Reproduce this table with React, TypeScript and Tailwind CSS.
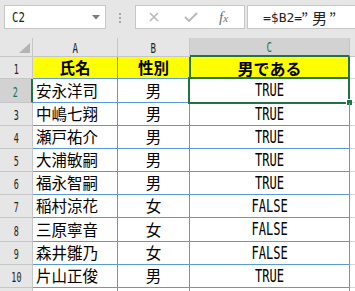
import React from 'react';

type Row = { no: number; name: string; sex: string; result: string; h: string };

const ROWS: Row[] = [
  { no: 2, name: '安永洋司', sex: '男', result: 'TRUE', h: 'h-[24px]' },
  { no: 3, name: '中嶋七翔', sex: '男', result: 'TRUE', h: 'h-[23px]' },
  { no: 4, name: '瀬戸祐介', sex: '男', result: 'TRUE', h: 'h-[23px]' },
  { no: 5, name: '大浦敏嗣', sex: '男', result: 'TRUE', h: 'h-[23px]' },
  { no: 6, name: '福永智嗣', sex: '男', result: 'TRUE', h: 'h-[23px]' },
  { no: 7, name: '稲村涼花', sex: '女', result: 'FALSE', h: 'h-[23px]' },
  { no: 8, name: '三原寧音', sex: '女', result: 'FALSE', h: 'h-[24px]' },
  { no: 9, name: '森井雛乃', sex: '女', result: 'FALSE', h: 'h-[23px]' },
  { no: 10, name: '片山正俊', sex: '男', result: 'TRUE', h: 'h-[23px]' },
];

// Half-width glyphs in the sheet are tall and narrow, so squeeze a mono face.
const Narrow = ({ children, className = '' }: { children: React.ReactNode; className?: string }) => (
  <span className={`inline-block font-['DejaVu_Sans_Mono',monospace] leading-none ${className}`}>{children}</span>
);

const cjk = "font-['Noto_Sans_CJK_JP',sans-serif]";

const App: React.FC = () => {
  return (
    <div className="w-[355px] h-[291px] overflow-hidden bg-white select-none">
      {/* Name box + formula bar */}
      <div className="h-[38px] bg-[#e6e6e6] flex items-start pt-[5px]">
        <div className="ml-[4px] w-[102px] h-[24px] bg-white border border-[#c6c6c6] flex items-center justify-between pl-[7px] pr-[5px]">
          <Narrow className="text-[14px] text-[#222] scale-x-[0.76] origin-left">C2</Narrow>
          <svg width="8" height="5" viewBox="0 0 8 5">
            <polygon points="0,0 8,0 4,4.5" fill="#7a7a7a" />
          </svg>
        </div>
        <div className="ml-[13px] mt-[8px] flex flex-col gap-[2px]">
          <span className="w-[2px] h-[2px] bg-[#a8a8a8]" />
          <span className="w-[2px] h-[2px] bg-[#a8a8a8]" />
          <span className="w-[2px] h-[2px] bg-[#a8a8a8]" />
        </div>
        <div className="ml-[14px] w-[110px] h-[24px] bg-white border border-[#c6c6c6] flex items-center">
          <svg className="ml-[13px]" width="10" height="10" viewBox="0 0 10 10">
            <path d="M1 1 L9 9 M9 1 L1 9" stroke="#b8b8b8" strokeWidth="1.6" />
          </svg>
          <svg className="ml-[25px]" width="14" height="10" viewBox="0 0 14 10">
            <path d="M1 5 L5 9 L13 1" stroke="#b8b8b8" strokeWidth="1.8" fill="none" />
          </svg>
          <span className="ml-[21px] font-['Liberation_Serif',serif] italic text-[15px] text-[#6e6e6e] leading-none">
            f<span className="text-[11px]">x</span>
          </span>
        </div>
        <div className="ml-[2px] flex-1 h-[24px] bg-white border border-r-0 border-[#c6c6c6] flex items-center pl-[15px]">
          <Narrow className="w-[38px] text-[13px] text-[#222]">=$B2=</Narrow>
          <span className={`${cjk} w-[10px] text-[15px] text-[#222] leading-none`}>”</span>
          <span className={`${cjk} w-[17px] text-center text-[15px] text-[#222] leading-none`}>男</span>
          <span className={`${cjk} ml-[1px] text-[15px] text-[#222] leading-none`}>”</span>
        </div>
      </div>

      {/* Column headers */}
      <div className="flex h-[19px] bg-[#e6e6e6]">
        <div className="w-[33px] border-r border-b border-[#c6c6c6] relative">
          <svg className="absolute right-[2px] bottom-[3px]" width="11" height="10" viewBox="0 0 11 10">
            <polygon points="11,0 11,10 0,10" fill="#b4b4b4" />
          </svg>
        </div>
        <div className="w-[85px] border-r border-b border-[#c6c6c6] flex items-center justify-center pt-[2px]">
          <Narrow className="text-[14px] text-[#222] scale-x-[0.65]">A</Narrow>
        </div>
        <div className="w-[72px] border-r border-b border-[#c6c6c6] flex items-center justify-center pt-[2px]">
          <Narrow className="text-[14px] text-[#222] scale-x-[0.65]">B</Narrow>
        </div>
        <div className="w-[160px] bg-[#d2d2d2] border-r border-[#c6c6c6] border-b-2 border-b-[#217346] flex items-center justify-center pt-[1px]">
          <Narrow className="text-[14px] text-[#217346] scale-x-[0.65]">C</Narrow>
        </div>
        <div className="flex-1 border-b border-[#c6c6c6]" />
      </div>

      {/* Row 1: yellow header cells */}
      <div className="flex h-[22px]">
        <div className="w-[33px] bg-[#e6e6e6] border-r border-b border-[#c6c6c6] flex items-end justify-center pb-[2px]">
          <Narrow className="text-[14px] text-[#222] scale-x-[0.6]">1</Narrow>
        </div>
        <div className={`w-[85px] bg-[#ffff00] border-r border-b border-[#5b9bd5] flex items-center justify-center ${cjk} font-bold text-[15.5px] text-black`}>
          氏名
        </div>
        <div className={`w-[72px] bg-[#ffff00] border-r border-b border-[#5b9bd5] flex items-center justify-center ${cjk} font-bold text-[15.5px] text-black`}>
          性別
        </div>
        <div className={`relative w-[160px] bg-[#ffff00] border-r border-b border-[#5b9bd5] flex items-center justify-center ${cjk} font-bold text-[16px] text-black`}>
          <span className="absolute -left-[1px] top-0 bottom-0 w-[2px] bg-[#217346]" />
          <span className="absolute -right-[1px] top-0 bottom-0 w-[2px] bg-[#217346]" />
          男である
        </div>
        <div className="flex-1 border-b border-[#d4d4d4]" />
      </div>

      {/* Data rows */}
      {ROWS.map(r => {
        const active = r.no === 2;
        return (
          <div key={r.no} className={`flex ${r.h}`}>
            <div
              className={`w-[33px] border-b border-[#c6c6c6] flex items-end justify-center pb-[3px] ${
                active ? 'bg-[#d2d2d2] border-r-2 border-r-[#217346]' : 'bg-[#e6e6e6] border-r'
              }`}
            >
              <Narrow className={`text-[14px] scale-x-[0.6] ${active ? 'text-[#217346]' : 'text-[#222]'}`}>{r.no}</Narrow>
            </div>
            <div className={`w-[85px] border-r border-b border-[#5b9bd5] flex items-center pl-[3px] ${cjk} text-[15.5px] text-black`}>
              {r.name}
            </div>
            <div className={`w-[72px] border-r border-b border-[#5b9bd5] flex items-center justify-center ${cjk} text-[15.5px] text-black`}>
              {r.sex}
            </div>
            <div className="relative w-[160px] border-r border-b border-[#5b9bd5] flex items-center justify-center">
              <Narrow className="text-[17px] text-black scale-x-[0.71]">{r.result}</Narrow>
              {active && (
                <>
                  <span className="absolute -left-[2px] -top-[2px] -right-[1px] -bottom-[2px] border-2 border-[#217346]" />
                  <span className="absolute -right-[4px] -bottom-[4px] w-[7px] h-[7px] bg-[#217346] border border-white" />
                </>
              )}
            </div>
            <div className="flex-1 border-b border-[#d4d4d4]" />
          </div>
        );
      })}

      {/* Row 11, cut off by the window */}
      <div className="flex h-[23px]">
        <div className="w-[33px] bg-[#e6e6e6] border-r border-b border-[#c6c6c6]" />
        <div className="w-[85px] border-r border-[#5b9bd5]" />
        <div className="w-[72px] border-r border-[#5b9bd5]" />
        <div className="w-[160px] border-r border-[#5b9bd5]" />
        <div className="flex-1" />
      </div>
    </div>
  );
};

export default App;
